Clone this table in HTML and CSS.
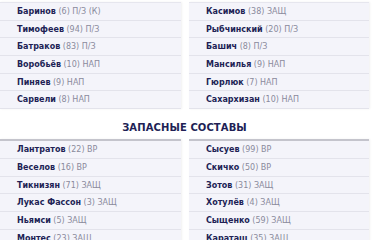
FILE: index.html
```html
<!DOCTYPE html>
<html lang="ru">
<head>
<meta charset="utf-8">
<link rel="stylesheet" href="styles.css">
</head>
<body>
<div class="page">
  <div class="cols">
    <ul class="list">
      <li class="row"><b>Баринов</b> (6) П/З (К)</li>
      <li class="row"><b>Тимофеев</b> (94) П/З</li>
      <li class="row"><b>Батраков</b> (83) П/З</li>
      <li class="row"><b>Воробьёв</b> (10) НАП</li>
      <li class="row"><b>Пиняев</b> (9) НАП</li>
      <li class="row"><b>Сарвели</b> (8) НАП</li>
    </ul>
    <ul class="list">
      <li class="row"><b>Касимов</b> (38) ЗАЩ</li>
      <li class="row"><b>Рыбчинский</b> (20) П/З</li>
      <li class="row"><b>Башич</b> (8) П/З</li>
      <li class="row"><b>Мансилья</b> (9) НАП</li>
      <li class="row"><b>Гюрлюк</b> (7) НАП</li>
      <li class="row"><b>Сахархизан</b> (10) НАП</li>
    </ul>
  </div>
  <h2 class="heading">ЗАПАСНЫЕ СОСТАВЫ</h2>
  <div class="cols">
    <ul class="list subs">
      <li class="row"><b>Лантратов</b> (22) ВР</li>
      <li class="row"><b>Веселов</b> (16) ВР</li>
      <li class="row"><b>Тикнизян</b> (71) ЗАЩ</li>
      <li class="row"><b>Лукас Фассон</b> (3) ЗАЩ</li>
      <li class="row"><b>Ньямси</b> (5) ЗАЩ</li>
      <li class="row"><b>Монтес</b> (23) ЗАЩ</li>
    </ul>
    <ul class="list subs">
      <li class="row"><b>Сысуев</b> (99) ВР</li>
      <li class="row"><b>Скичко</b> (50) ВР</li>
      <li class="row"><b>Зотов</b> (31) ЗАЩ</li>
      <li class="row"><b>Хотулёв</b> (4) ЗАЩ</li>
      <li class="row"><b>Сыщенко</b> (59) ЗАЩ</li>
      <li class="row"><b>Караташ</b> (35) ЗАЩ</li>
    </ul>
  </div>
</div>
</body>
</html>
```

FILE: styles.css
```css
html, body {
  margin: 0;
  padding: 0;
  background: #ffffff;
}
body {
  font-family: "DejaVu Sans", "Noto Sans", sans-serif;
  overflow: hidden;
}
.page {
  width: 369px;
  padding-top: 2px;
}
.cols {
  display: grid;
  grid-template-columns: 181px 180px;
  column-gap: 8px;
}
.list {
  list-style: none;
  margin: 0;
  padding: 0;
  border-top: 1px solid #e6e6ee;
  box-shadow: 1px 0 2px rgba(0, 0, 0, 0.06);
}
.list.subs {
  border-top: 2px solid #c4c4cc;
}
.row {
  box-sizing: border-box;
  height: 17.7px;
  padding: 2px 0 0 17px;
  line-height: 14.7px;
  background: #f4f4fa;
  border-bottom: 1px solid #e3e3eb;
  font-size: 8px;
  color: #8a8a9c;
  white-space: nowrap;
}
.row b {
  color: #211f55;
  font-weight: 700;
}
.heading {
  margin: 0;
  padding: 12px 0 4px;
  height: 14px;
  line-height: 14px;
  text-align: center;
  font-size: 10px;
  font-weight: 700;
  color: #211f55;
  letter-spacing: 0.1px;
}
```
